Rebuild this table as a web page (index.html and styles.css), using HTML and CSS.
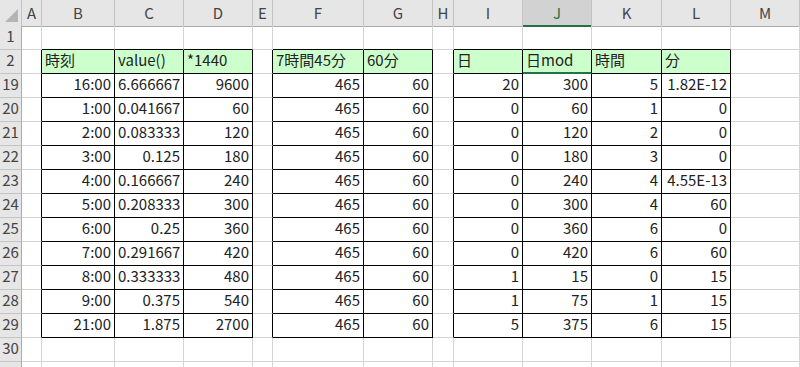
FILE: index.html
```html
<!DOCTYPE html>
<html lang="ja">
<head>
<meta charset="utf-8">
<link rel="stylesheet" href="styles.css">
</head>
<body>
<div class="sheet">
  <div class="row hdr">
    <div class="c corner"><span class="tri"></span></div>
    <div class="c">A</div><div class="c">B</div><div class="c">C</div><div class="c">D</div><div class="c">E</div><div class="c">F</div><div class="c">G</div><div class="c">H</div><div class="c">I</div><div class="c sel">J</div><div class="c">K</div><div class="c">L</div><div class="c">M</div>
  </div>
  <div class="row">
    <div class="c rh">1</div>
    <div class="c"></div><div class="c a"></div><div class="c a"></div><div class="c a"></div><div class="c"></div><div class="c a"></div><div class="c a"></div><div class="c"></div><div class="c a"></div><div class="c a"></div><div class="c a"></div><div class="c a"></div><div class="c"></div>
  </div>
  <div class="row">
    <div class="c rh">2</div>
    <div class="c l"></div><div class="c t g">時刻</div><div class="c t g">value()</div><div class="c t g">*1440</div><div class="c l"></div><div class="c t g">7時間45分</div><div class="c t g">60分</div><div class="c l"></div><div class="c t g">日</div><div class="c t g act">日mod</div><div class="c t g">時間</div><div class="c t g">分</div><div class="c"></div>
  </div>
  <div class="row">
    <div class="c rh">19</div>
    <div class="c l"></div><div class="c t n">16:00</div><div class="c t n">6.666667</div><div class="c t n">9600</div><div class="c l"></div><div class="c t n">465</div><div class="c t n">60</div><div class="c l"></div><div class="c t n">20</div><div class="c t n">300</div><div class="c t n">5</div><div class="c t n">1.82E-12</div><div class="c"></div>
  </div>
  <div class="row">
    <div class="c rh">20</div>
    <div class="c l"></div><div class="c t n">1:00</div><div class="c t n">0.041667</div><div class="c t n">60</div><div class="c l"></div><div class="c t n">465</div><div class="c t n">60</div><div class="c l"></div><div class="c t n">0</div><div class="c t n">60</div><div class="c t n">1</div><div class="c t n">0</div><div class="c"></div>
  </div>
  <div class="row">
    <div class="c rh">21</div>
    <div class="c l"></div><div class="c t n">2:00</div><div class="c t n">0.083333</div><div class="c t n">120</div><div class="c l"></div><div class="c t n">465</div><div class="c t n">60</div><div class="c l"></div><div class="c t n">0</div><div class="c t n">120</div><div class="c t n">2</div><div class="c t n">0</div><div class="c"></div>
  </div>
  <div class="row">
    <div class="c rh">22</div>
    <div class="c l"></div><div class="c t n">3:00</div><div class="c t n">0.125</div><div class="c t n">180</div><div class="c l"></div><div class="c t n">465</div><div class="c t n">60</div><div class="c l"></div><div class="c t n">0</div><div class="c t n">180</div><div class="c t n">3</div><div class="c t n">0</div><div class="c"></div>
  </div>
  <div class="row">
    <div class="c rh">23</div>
    <div class="c l"></div><div class="c t n">4:00</div><div class="c t n">0.166667</div><div class="c t n">240</div><div class="c l"></div><div class="c t n">465</div><div class="c t n">60</div><div class="c l"></div><div class="c t n">0</div><div class="c t n">240</div><div class="c t n">4</div><div class="c t n">4.55E-13</div><div class="c"></div>
  </div>
  <div class="row">
    <div class="c rh">24</div>
    <div class="c l"></div><div class="c t n">5:00</div><div class="c t n">0.208333</div><div class="c t n">300</div><div class="c l"></div><div class="c t n">465</div><div class="c t n">60</div><div class="c l"></div><div class="c t n">0</div><div class="c t n">300</div><div class="c t n">4</div><div class="c t n">60</div><div class="c"></div>
  </div>
  <div class="row">
    <div class="c rh">25</div>
    <div class="c l"></div><div class="c t n">6:00</div><div class="c t n">0.25</div><div class="c t n">360</div><div class="c l"></div><div class="c t n">465</div><div class="c t n">60</div><div class="c l"></div><div class="c t n">0</div><div class="c t n">360</div><div class="c t n">6</div><div class="c t n">0</div><div class="c"></div>
  </div>
  <div class="row">
    <div class="c rh">26</div>
    <div class="c l"></div><div class="c t n">7:00</div><div class="c t n">0.291667</div><div class="c t n">420</div><div class="c l"></div><div class="c t n">465</div><div class="c t n">60</div><div class="c l"></div><div class="c t n">0</div><div class="c t n">420</div><div class="c t n">6</div><div class="c t n">60</div><div class="c"></div>
  </div>
  <div class="row">
    <div class="c rh">27</div>
    <div class="c l"></div><div class="c t n">8:00</div><div class="c t n">0.333333</div><div class="c t n">480</div><div class="c l"></div><div class="c t n">465</div><div class="c t n">60</div><div class="c l"></div><div class="c t n">1</div><div class="c t n">15</div><div class="c t n">0</div><div class="c t n">15</div><div class="c"></div>
  </div>
  <div class="row">
    <div class="c rh">28</div>
    <div class="c l"></div><div class="c t n">9:00</div><div class="c t n">0.375</div><div class="c t n">540</div><div class="c l"></div><div class="c t n">465</div><div class="c t n">60</div><div class="c l"></div><div class="c t n">1</div><div class="c t n">75</div><div class="c t n">1</div><div class="c t n">15</div><div class="c"></div>
  </div>
  <div class="row">
    <div class="c rh">29</div>
    <div class="c l"></div><div class="c t n">21:00</div><div class="c t n">1.875</div><div class="c t n">2700</div><div class="c l"></div><div class="c t n">465</div><div class="c t n">60</div><div class="c l"></div><div class="c t n">5</div><div class="c t n">375</div><div class="c t n">6</div><div class="c t n">15</div><div class="c"></div>
  </div>
  <div class="row">
    <div class="c rh">30</div>
    <div class="c"></div><div class="c"></div><div class="c"></div><div class="c"></div><div class="c"></div><div class="c"></div><div class="c"></div><div class="c"></div><div class="c"></div><div class="c"></div><div class="c"></div><div class="c"></div><div class="c"></div>
  </div>
  <div class="row">
    <div class="c rh"></div>
    <div class="c"></div><div class="c"></div><div class="c"></div><div class="c"></div><div class="c"></div><div class="c"></div><div class="c"></div><div class="c"></div><div class="c"></div><div class="c"></div><div class="c"></div><div class="c"></div><div class="c"></div>
  </div>
</div>
</body>
</html>
```

FILE: styles.css
```css
html, body {
  margin: 0;
  padding: 0;
  background: #ffffff;
  overflow: hidden;
}
body {
  font-family: "Noto Sans CJK JP", "Noto Sans", sans-serif;
}
.sheet {
  width: 800px;
  height: 367px;
  overflow: hidden;
}
.row {
  display: grid;
  grid-template-columns: 22px 20px 73px 69px 69px 20px 91px 69px 21px 69px 69px 70px 69px 69px;
  height: 24px;
}
.row.hdr {
  height: 26px;
}
.c {
  box-sizing: border-box;
  border-right: 1px solid #d4d4d4;
  border-bottom: 1px solid #d4d4d4;
  font-size: 15px;
  line-height: 19px;
  padding: 0 3px;
  white-space: nowrap;
  color: #222;
  position: relative;
}
.n {
  text-align: right;
}
.g {
  background: #ccffcc;
}
.c.t {
  border-right-color: #000;
  border-bottom-color: #000;
}
.c.l {
  border-right-color: #000;
}
.c.a {
  border-bottom-color: #000;
}
.c.act {
  border-bottom: 2px solid #217346;
}
.hdr .c {
  background: #e6e6e6;
  border-right-color: #c4c4c4;
  border-bottom-color: #ababab;
  text-align: center;
  line-height: 25px;
  color: #444;
  padding: 0;
}
.hdr .c.sel {
  background: #d2d2d2;
  border-bottom: 2px solid #217346;
  color: #217346;
}
.c.rh {
  background: #e6e6e6;
  border-right-color: #ababab;
  border-bottom-color: #c4c4c4;
  text-align: center;
  color: #444;
  padding: 0;
}
.tri {
  position: absolute;
  right: 3px;
  bottom: 4px;
  width: 0;
  height: 0;
  border-left: 13px solid transparent;
  border-bottom: 13px solid #b4b4b4;
}
```
